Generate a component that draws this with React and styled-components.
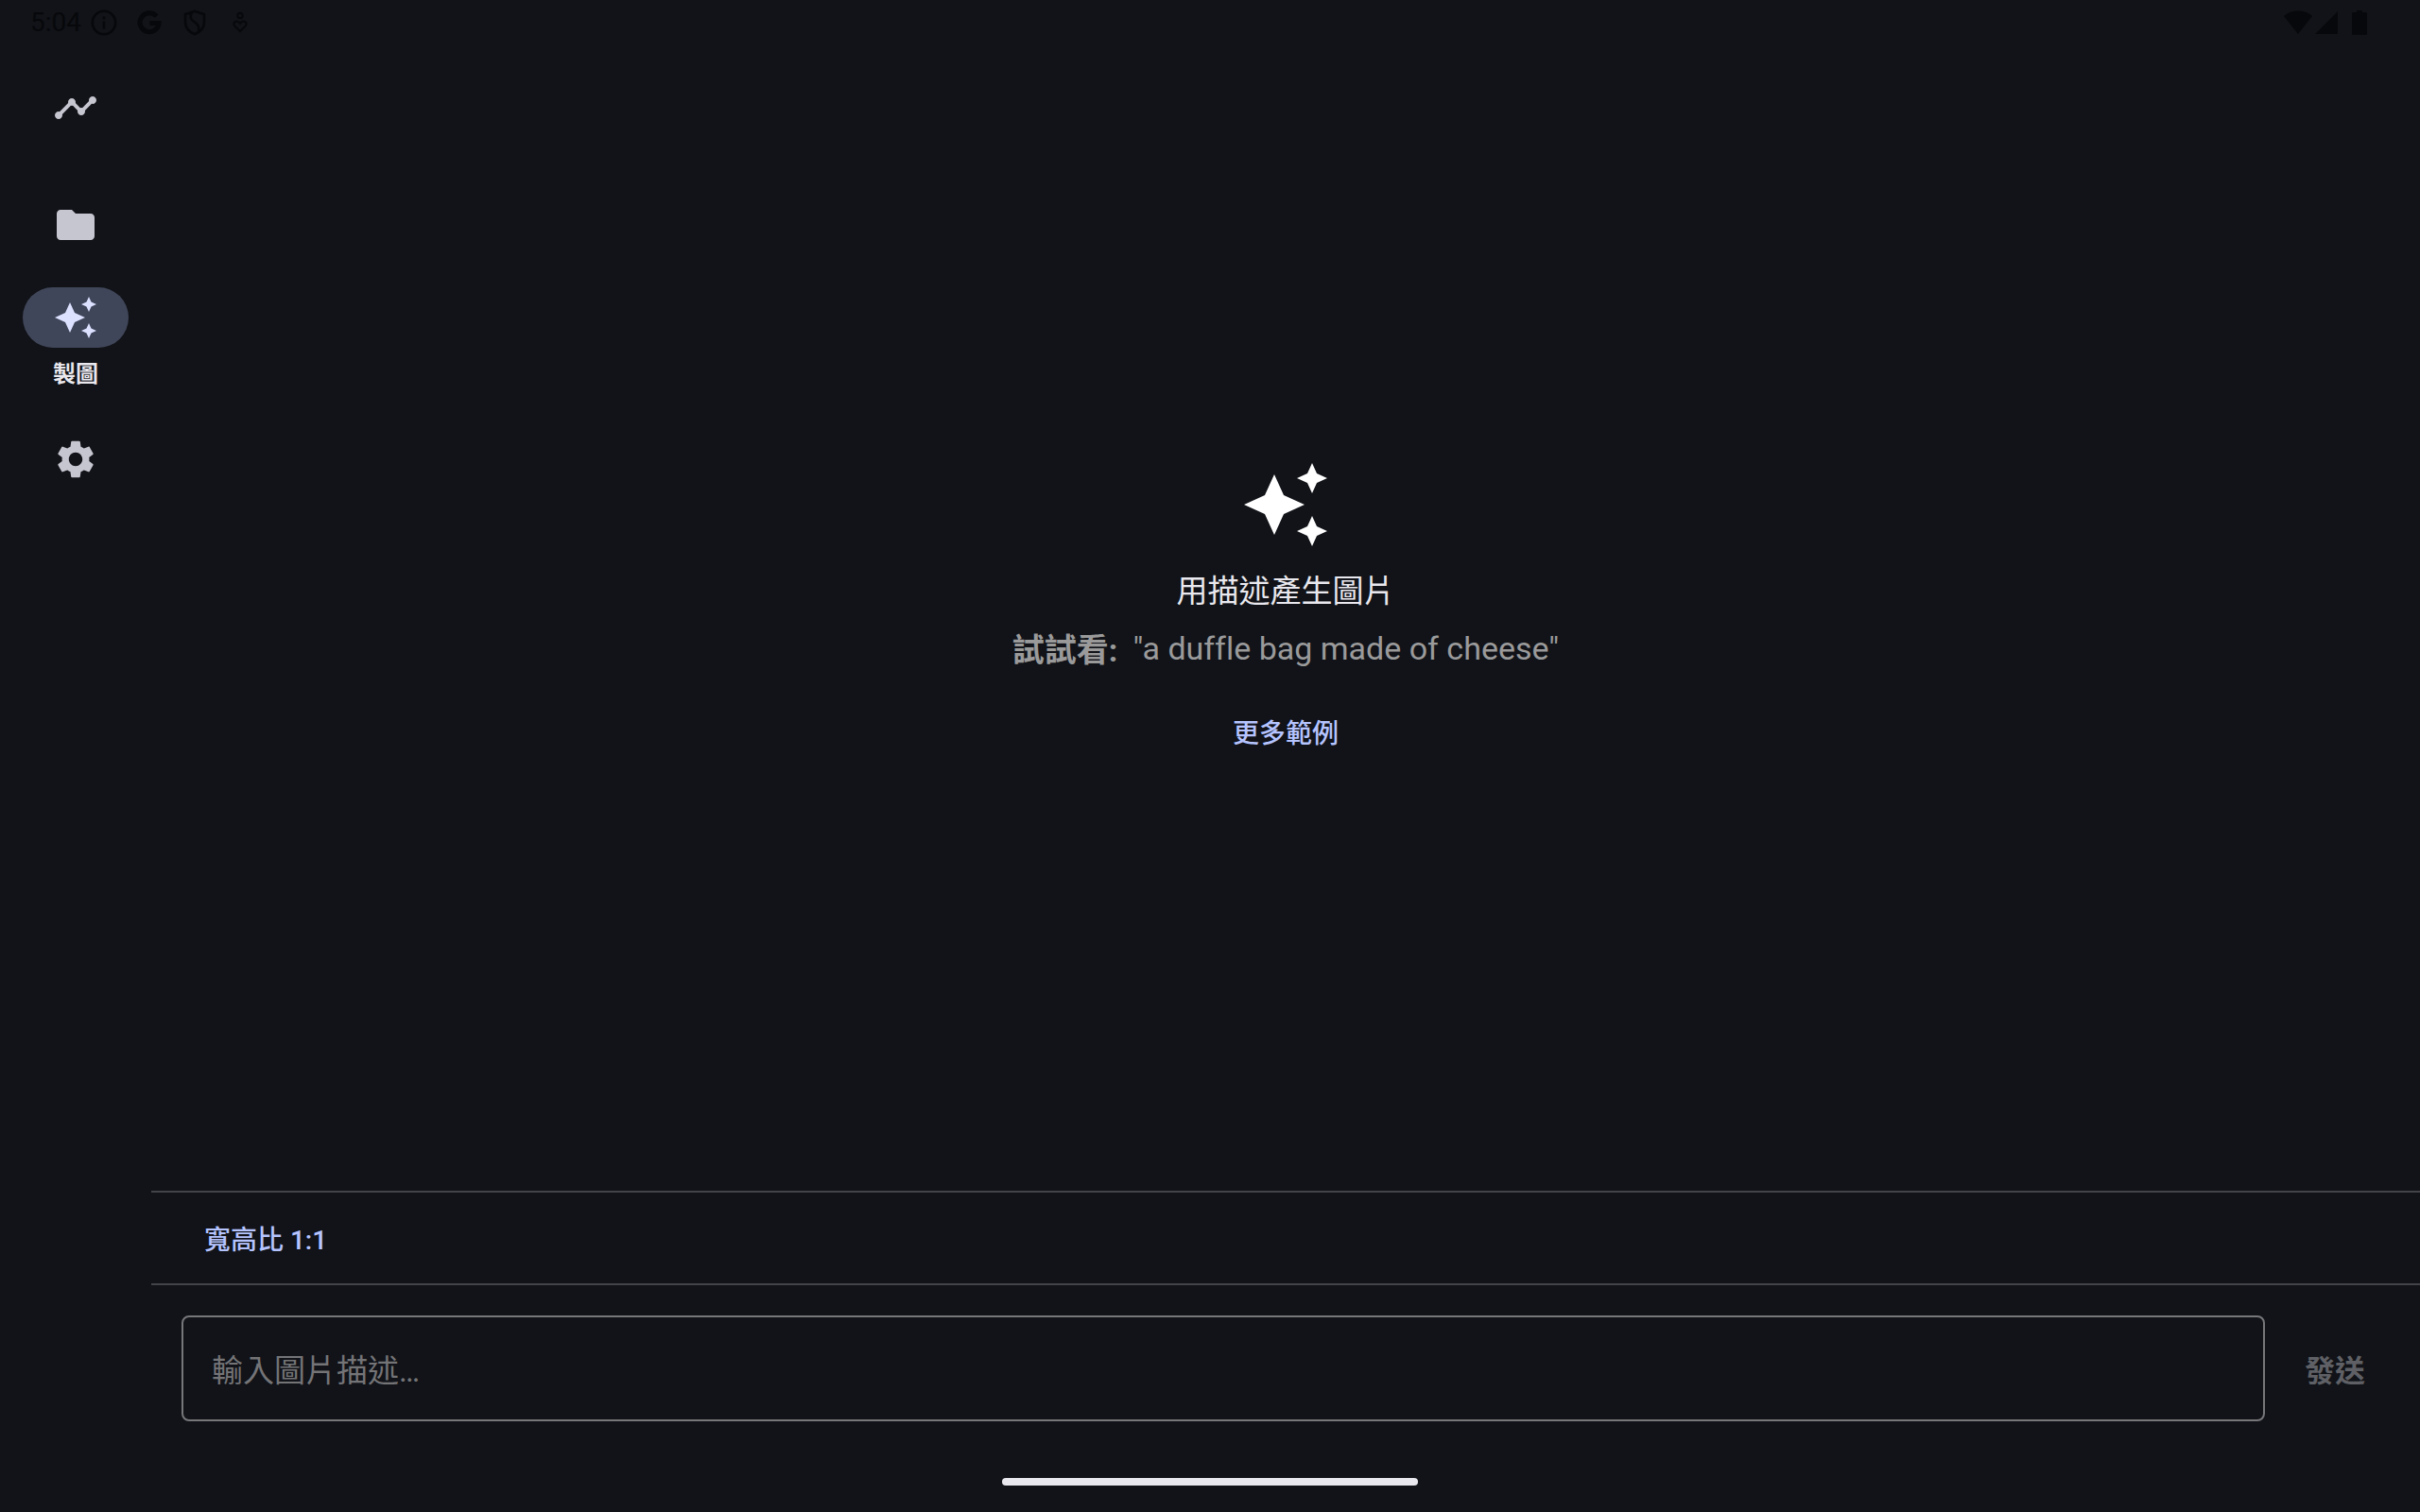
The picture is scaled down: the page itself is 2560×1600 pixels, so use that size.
import React, { useState } from "react";
import styled, { createGlobalStyle } from "styled-components";

const colors = {
  surface: "#111318",
  onSurface: "#e9e8ee",
  hero: "#ffffff",
  muted: "#c6c6d0",
  pill: "#404659",
  onPill: "#dce1ff",
  primary: "#b5c4ff",
  divider: "#434348",
  outline: "#77777a",
  placeholder: "#747477",
  hint: "#9a9a9b",
  disabled: "#5f6065",
  status: "#07080b",
};

const GlobalStyle = createGlobalStyle`
  *, *::before, *::after { box-sizing: border-box; }
  body {
    margin: 0;
    background: ${colors.surface};
    color: ${colors.onSurface};
    font-family: Roboto, "Noto Sans CJK TC", sans-serif;
  }
  button, input { font: inherit; color: inherit; }
`;

const Screen = styled.div`
  display: flex;
  flex-direction: column;
  min-height: 100vh;
`;

const StatusBar = styled.header`
  display: flex;
  justify-content: space-between;
  align-items: center;
  height: 48px;
  padding: 0 56px 0 32px;
  color: ${colors.status};
`;

const Clock = styled.time`
  font-size: 28px;
  line-height: 32px;
`;

const StatusGroup = styled.div`
  display: flex;
  align-items: center;
  gap: ${(p) => p.$gap}px;
`;

const Body = styled.div`
  display: flex;
  flex: 1;
`;

const Rail = styled.nav`
  display: flex;
  flex-direction: column;
  gap: 12px;
  flex: 0 0 160px;
  padding-top: 10px;
`;

const RailButton = styled.button`
  display: flex;
  flex-direction: column;
  align-items: center;
  justify-content: center;
  gap: 4px;
  height: 112px;
  padding: 0;
  border: 0;
  background: none;
  cursor: pointer;
`;

const Pill = styled.span`
  display: grid;
  place-items: center;
  flex: none;
  width: 112px;
  height: 64px;
  border-radius: 32px;
  background: ${(p) => (p.$active ? colors.pill : "transparent")};
  color: ${(p) => (p.$active ? colors.onPill : colors.muted)};
`;

const RailLabel = styled.span`
  flex: none;
  font-size: 24px;
  font-weight: 700;
  line-height: 48px;
`;

const Main = styled.main`
  display: flex;
  flex-direction: column;
  flex: 1;
  min-width: 0;
`;

const Empty = styled.section`
  display: flex;
  flex-direction: column;
  flex: 1;
  align-items: center;
  justify-content: center;
`;

const Hero = styled.div`
  display: flex;
  color: ${colors.hero};
`;

const Title = styled.h1`
  margin: 16px 0 8px;
  font-size: 33px;
  font-weight: 400;
  line-height: 56px;
`;

const Hint = styled.p`
  display: flex;
  align-items: flex-start;
  gap: 16px;
  margin: 0 0 12px;
  color: ${colors.hint};
  font-size: 34px;
  line-height: 48px;
  font-variant-ligatures: none;
`;

const HintLead = styled.strong`
  line-height: 52px;
`;

const TextButton = styled.button`
  height: 96px;
  padding: 0 24px;
  border: 0;
  background: none;
  color: ${colors.primary};
  font-size: 28px;
  font-weight: 500;
  cursor: pointer;
`;

const Options = styled.div`
  display: flex;
  padding: 0 32px;
  border: solid ${colors.divider};
  border-width: 2px 0;
`;

const Composer = styled.form`
  display: flex;
  gap: 16px;
  padding: 32px;
`;

const Prompt = styled.input`
  flex: 1;
  min-width: 0;
  height: 112px;
  padding: 4px 30px 0;
  border: 2px solid ${colors.outline};
  border-radius: 8px;
  outline: 0;
  background: none;
  font-size: 33px;
  &::placeholder { color: ${colors.placeholder}; opacity: 1; }
`;

const Send = styled.button`
  width: 116px;
  padding: 0;
  border: 0;
  background: none;
  font-size: 32px;
  font-weight: 700;
  &:disabled { color: ${colors.disabled}; }
`;

const GestureBar = styled.footer`
  display: grid;
  place-items: center;
  height: 64px;
`;

const Handle = styled.div`
  width: 440px;
  height: 8px;
  border-radius: 4px;
  background: ${colors.onSurface};
`;

const paths = {
  timeline:
    "M23 8c0 1.1-.9 2-2 2-.18 0-.35-.02-.51-.07l-3.56 3.55c.05.16.07.34.07.52 0 1.1-.9 2-2 2s-2-.9-2-2c0-.18.02-.36.07-.52l-2.55-2.55c-.16.05-.34.07-.52.07s-.36-.02-.52-.07l-4.55 4.56c.05.16.07.33.07.51 0 1.1-.9 2-2 2s-2-.9-2-2 .9-2 2-2c.18 0 .35.02.51.07l4.56-4.55C8.02 9.36 8 9.18 8 9c0-1.1.9-2 2-2s2 .9 2 2c0 .18-.02.36-.07.52l2.55 2.55c.16-.05.34-.07.52-.07s.36.02.52.07l3.55-3.56C19.02 8.35 19 8.18 19 8c0-1.1.9-2 2-2s2 .9 2 2z",
  folder:
    "M10 4H4c-1.1 0-1.99.9-1.99 2L2 18c0 1.1.9 2 2 2h16c1.1 0 2-.9 2-2V8c0-1.1-.9-2-2-2h-8l-2-2z",
  sparkle:
    "M19 9l1.25-2.75L23 5l-2.75-1.25L19 1l-1.25 2.75L15 5l2.75 1.25L19 9zm-7.5.5L9 4 6.5 9.5 1 12l5.5 2.5L9 20l2.5-5.5L17 12l-5.5-2.5zM19 15l-1.25 2.75L15 19l2.75 1.25L19 23l1.25-2.75L23 19l-2.75-1.25L19 15z",
  settings:
    "M19.14 12.94c.04-.3.06-.61.06-.94 0-.32-.02-.64-.07-.94l2.03-1.58c.18-.14.23-.41.12-.61l-1.92-3.32c-.12-.22-.37-.29-.59-.22l-2.39.96c-.5-.38-1.03-.7-1.62-.94l-.36-2.54c-.04-.24-.24-.41-.48-.41h-3.84c-.24 0-.43.17-.47.41l-.36 2.54c-.59.24-1.13.57-1.62.94l-2.39-.96c-.22-.08-.47 0-.59.22L2.74 8.87c-.12.21-.08.47.12.61l2.03 1.58c-.05.3-.09.63-.09.94s.02.64.07.94l-2.03 1.58c-.18.14-.23.41-.12.61l1.92 3.32c.12.22.37.29.59.22l2.39-.96c.5.38 1.03.7 1.62.94l.36 2.54c.05.24.24.41.48.41h3.84c.24 0 .44-.17.47-.41l.36-2.54c.59-.24 1.13-.56 1.62-.94l2.39.96c.22.08.47 0 .59-.22l1.92-3.32c.12-.22.07-.47-.12-.61l-2.01-1.58zM12 15.6c-1.98 0-3.6-1.62-3.6-3.6s1.62-3.6 3.6-3.6 3.6 1.62 3.6 3.6-1.62 3.6-3.6 3.6z",
};

function Icon({ name, size = 48 }) {
  return (
    <svg width={size} height={size} viewBox="0 0 24 24" fill="currentColor" aria-hidden="true">
      <path d={paths[name]} />
    </svg>
  );
}

const items = [
  { id: "stats", icon: "timeline", label: "統計" },
  { id: "files", icon: "folder", label: "檔案" },
  { id: "create", icon: "sparkle", label: "製圖" },
  { id: "settings", icon: "settings", label: "設定" },
];

function StatusIcons() {
  const line = { fill: "none", stroke: "currentColor" };
  return (
    <StatusGroup $gap={20}>
      <svg width="28" height="28" viewBox="0 0 28 28" {...line} strokeWidth="2.6" aria-hidden="true">
        <circle cx="14" cy="14" r="12.2" />
        <path d="M14 12.5v8M14 7.5v3" />
      </svg>
      <svg width="28" height="28" viewBox="0 0 28 28" {...line} strokeWidth="5" aria-hidden="true">
        <path d="M21.6 7.2A10 10 0 1 0 24 14.6H14.4" />
      </svg>
      <svg width="28" height="28" viewBox="0 0 28 28" {...line} strokeWidth="2.6" aria-hidden="true">
        <path d="M14 1.8L24 5.2V13c0 6-4 10.8-10 13.2C8 23.8 4 19 4 13V5.2z" />
        <path d="M11 3c-3 5-1 8 3 10.5s5 6 4 10" />
      </svg>
      <svg width="28" height="28" viewBox="0 0 28 28" {...line} strokeWidth="2" aria-hidden="true">
        <circle cx="14" cy="6.5" r="2.8" />
        <path d="M14 23L8.4 17.600C5.200 14 10.400 10.200 14 14.800 17.600 10.200 22.800 14 19.600 17.600z" />
      </svg>
    </StatusGroup>
  );
}

export default function App() {
  const [active, setActive] = useState("create");
  const [prompt, setPrompt] = useState("");

  return (
    <Screen lang="zh-Hant">
      <GlobalStyle />
      <StatusBar>
        <StatusGroup $gap={10}>
          <Clock>5:04</Clock>
          <StatusIcons />
        </StatusGroup>
        <svg width="88" height="28" viewBox="0 0 88 28" fill="currentColor" aria-hidden="true">
          <path d="M0 7C8.5 -.3 21.5 -.3 30 7L15 26z" />
          <path d="M57 2v24H33z" />
          <path d="M77 1h6v2h3.5q1.5 0 1.5 1.5v21q0 1.5-1.5 1.5h-13q-1.5 0-1.5-1.5v-21q0-1.5 1.5-1.5H77z" />
        </svg>
      </StatusBar>

      <Body>
        <Rail>
          {items.map((item) => (
            <RailButton
              key={item.id}
              type="button"
              aria-label={item.label}
              aria-current={active === item.id ? "page" : undefined}
              onClick={() => setActive(item.id)}
            >
              <Pill $active={active === item.id}>
                <Icon name={item.icon} />
              </Pill>
              {active === item.id && <RailLabel>{item.label}</RailLabel>}
            </RailButton>
          ))}
        </Rail>

        <Main>
          <Empty>
            <Hero>
              <Icon name="sparkle" size={96} />
            </Hero>
            <Title>用描述產生圖片</Title>
            <Hint>
              <HintLead>試試看:</HintLead>
              <span>"a duffle bag made of cheese"</span>
            </Hint>
            <TextButton type="button">更多範例</TextButton>
          </Empty>

          <Options>
            <TextButton type="button">寬高比 1:1</TextButton>
          </Options>

          <Composer onSubmit={(e) => e.preventDefault()}>
            <Prompt
              type="text"
              aria-label="輸入圖片描述"
              placeholder="輸入圖片描述…"
              value={prompt}
              onChange={(e) => setPrompt(e.target.value)}
            />
            <Send type="submit" disabled={!prompt}>
              發送
            </Send>
          </Composer>
        </Main>
      </Body>

      <GestureBar>
        <Handle />
      </GestureBar>
    </Screen>
  );
}
